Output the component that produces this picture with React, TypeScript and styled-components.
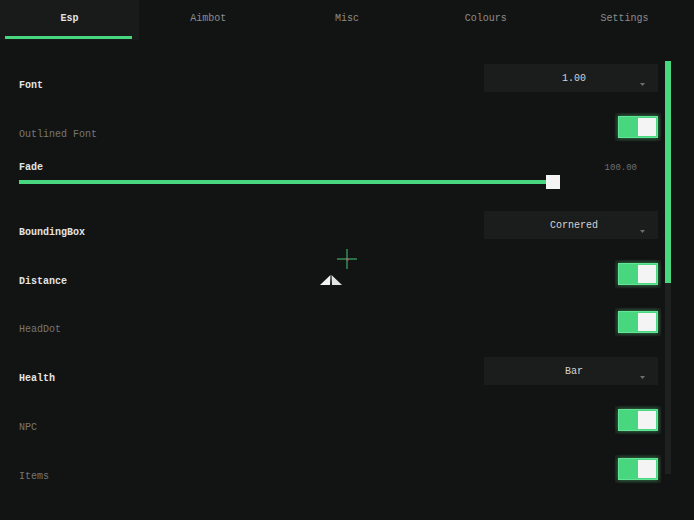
import styled, { createGlobalStyle } from "styled-components";

const GlobalStyle = createGlobalStyle`
  html, body { margin: 0; padding: 0; background: #121413; }
  body { font-family: "Liberation Mono", "DejaVu Sans Mono", monospace; }
`;

const GREEN = "#48d77e";

const tabs = ["Esp", "Aimbot", "Misc", "Colours", "Settings"];

type RowData =
  | { kind: "select"; label: string; value: string; bright?: boolean }
  | { kind: "toggle"; label: string; bright?: boolean }
  | { kind: "slider"; label: string; value: string };

const rows: RowData[] = [
  { kind: "select", label: "Font", value: "1.00", bright: true },
  { kind: "toggle", label: "Outlined Font" },
  { kind: "slider", label: "Fade", value: "100.00" },
  { kind: "select", label: "BoundingBox", value: "Cornered", bright: true },
  { kind: "toggle", label: "Distance", bright: true },
  { kind: "toggle", label: "HeadDot" },
  { kind: "select", label: "Health", value: "Bar", bright: true },
  { kind: "toggle", label: "NPC" },
  { kind: "toggle", label: "Items" },
];

const App = () => {
  return (
    <Window>
      <GlobalStyle />
      <TabBar>
        {tabs.map((t, i) => (
          <Tab key={t} $active={i === 0}>
            {t}
          </Tab>
        ))}
      </TabBar>
      <Body>
        <Content>
          {rows.map((r) => {
            if (r.kind === "slider") {
              return (
                <SliderRow key={r.label}>
                  <SliderHead>
                    <FadeLabel>{r.label}</FadeLabel>
                    <SliderValue>{r.value}</SliderValue>
                  </SliderHead>
                  <Slider>
                    <Fill />
                    <Knob />
                  </Slider>
                </SliderRow>
              );
            }
            return (
              <Row key={r.label}>
                <Label $bright={r.bright}>{r.label}</Label>
                {r.kind === "select" ? (
                  <Select>
                    <SelectText>{r.value}</SelectText>
                    <Caret width="5" height="3" viewBox="0 0 5 3">
                      <polygon points="0,0 5,0 2.5,3" fill="#6e6e6e" />
                    </Caret>
                  </Select>
                ) : (
                  <Toggle>
                    <ToggleKnob />
                  </Toggle>
                )}
              </Row>
            );
          })}
        </Content>
        <ScrollTrack>
          <ScrollThumb />
        </ScrollTrack>
      </Body>

      <Crosshair>
        <svg width="20" height="20" viewBox="0 0 20 20">
          <line x1="0" y1="10" x2="20" y2="10" stroke="#45c97a" strokeWidth="1" />
          <line x1="10" y1="0" x2="10" y2="20" stroke="#45c97a" strokeWidth="1" />
          <rect x="9.5" y="9.5" width="2" height="2" fill="#d04a6a" />
        </svg>
      </Crosshair>
      <Marker>
        <svg width="22" height="11" viewBox="0 0 22 11">
          <polygon points="10.5,0 0,10 10,10" fill="#f2f2f2" />
          <polygon points="11.5,0 22,10 12,10" fill="#e4e4e4" />
        </svg>
      </Marker>
    </Window>
  );
};

export default App;

const Window = styled.div`
  position: relative;
  width: 694px;
  height: 520px;
  overflow: hidden;
  background: #121413;
`;

const TabBar = styled.div`
  display: flex;
  height: 40px;
`;

const Tab = styled.div<{ $active?: boolean }>`
  position: relative;
  flex: 1;
  display: flex;
  align-items: center;
  justify-content: center;
  padding-bottom: 4px;
  box-sizing: border-box;
  font-size: 10px;
  font-weight: ${(p) => (p.$active ? 700 : 400)};
  color: ${(p) => (p.$active ? "#e2e2e2" : "#8c8c8c")};
  background: ${(p) => (p.$active ? "#191b1a" : "transparent")};

  &::after {
    content: "";
    display: ${(p) => (p.$active ? "block" : "none")};
    position: absolute;
    left: 5px;
    right: 7px;
    bottom: 1px;
    height: 3px;
    background: ${GREEN};
  }
`;

const Body = styled.div`
  display: flex;
`;

const Content = styled.div`
  flex: 1;
  padding: 20px 0 0 19px;
  display: flex;
  flex-direction: column;
`;

const Row = styled.div`
  height: 48.9px;
  display: flex;
  justify-content: space-between;
  align-items: flex-start;
`;

const Label = styled.div<{ $bright?: boolean }>`
  margin-top: 20px;
  line-height: 12px;
  font-size: 10px;
  font-weight: ${(p) => (p.$bright ? 700 : 400)};
  color: ${(p) => (p.$bright ? "#e4e4e4" : "#767676")};
`;

const Select = styled.div`
  position: relative;
  width: 174px;
  height: 28px;
  margin-top: 4px;
  background: #1b1d1c;
  display: flex;
  justify-content: center;
`;

const SelectText = styled.div`
  margin-top: 9px;
  margin-left: 6px;
  line-height: 12px;
  font-size: 10px;
  color: #d4d4d4;
`;

const Caret = styled.svg`
  position: absolute;
  right: 13px;
  top: 19px;
`;

const Toggle = styled.div`
  width: 40px;
  height: 22px;
  margin-top: 7px;
  box-sizing: border-box;
  border: 1px solid #62e596;
  background: ${GREEN};
  box-shadow: 0 0 4px rgba(72, 215, 126, 0.55), 0 0 0 3px rgba(30, 36, 32, 0.7);
  display: flex;
  justify-content: flex-end;
  padding: 1px;
`;

const ToggleKnob = styled.div`
  width: 18px;
  height: 18px;
  background: #f3f4f3;
`;

const SliderRow = styled.div`
  height: 48.9px;
  display: flex;
  flex-direction: column;
`;

const SliderHead = styled.div`
  display: flex;
  justify-content: space-between;
  align-items: center;
  height: 12px;
  margin-top: 4px;
  padding-right: 21px;
`;

const FadeLabel = styled.div`
  font-size: 10px;
  line-height: 12px;
  font-weight: 700;
  color: #e4e4e4;
`;

const SliderValue = styled.div`
  font-size: 9px;
  line-height: 12px;
  color: #6f6f6f;
`;

const Slider = styled.div`
  width: 541px;
  height: 14px;
  margin-top: 1px;
  display: flex;
  align-items: center;
`;

const Fill = styled.div`
  flex: 1;
  height: 4px;
  background: ${GREEN};
`;

const Knob = styled.div`
  width: 14px;
  height: 14px;
  margin-left: -7px;
  background: #f3f4f3;
`;

const ScrollTrack = styled.div`
  width: 6px;
  height: 413px;
  margin: 21px 23px 0 7px;
  background: #1f2120;
`;

const ScrollThumb = styled.div`
  height: 222px;
  background: ${GREEN};
`;

const Crosshair = styled.div`
  position: absolute;
  left: 337px;
  top: 249px;
  width: 20px;
  height: 20px;
`;

const Marker = styled.div`
  position: absolute;
  left: 320px;
  top: 273px;
  width: 22px;
  height: 11px;
`;
